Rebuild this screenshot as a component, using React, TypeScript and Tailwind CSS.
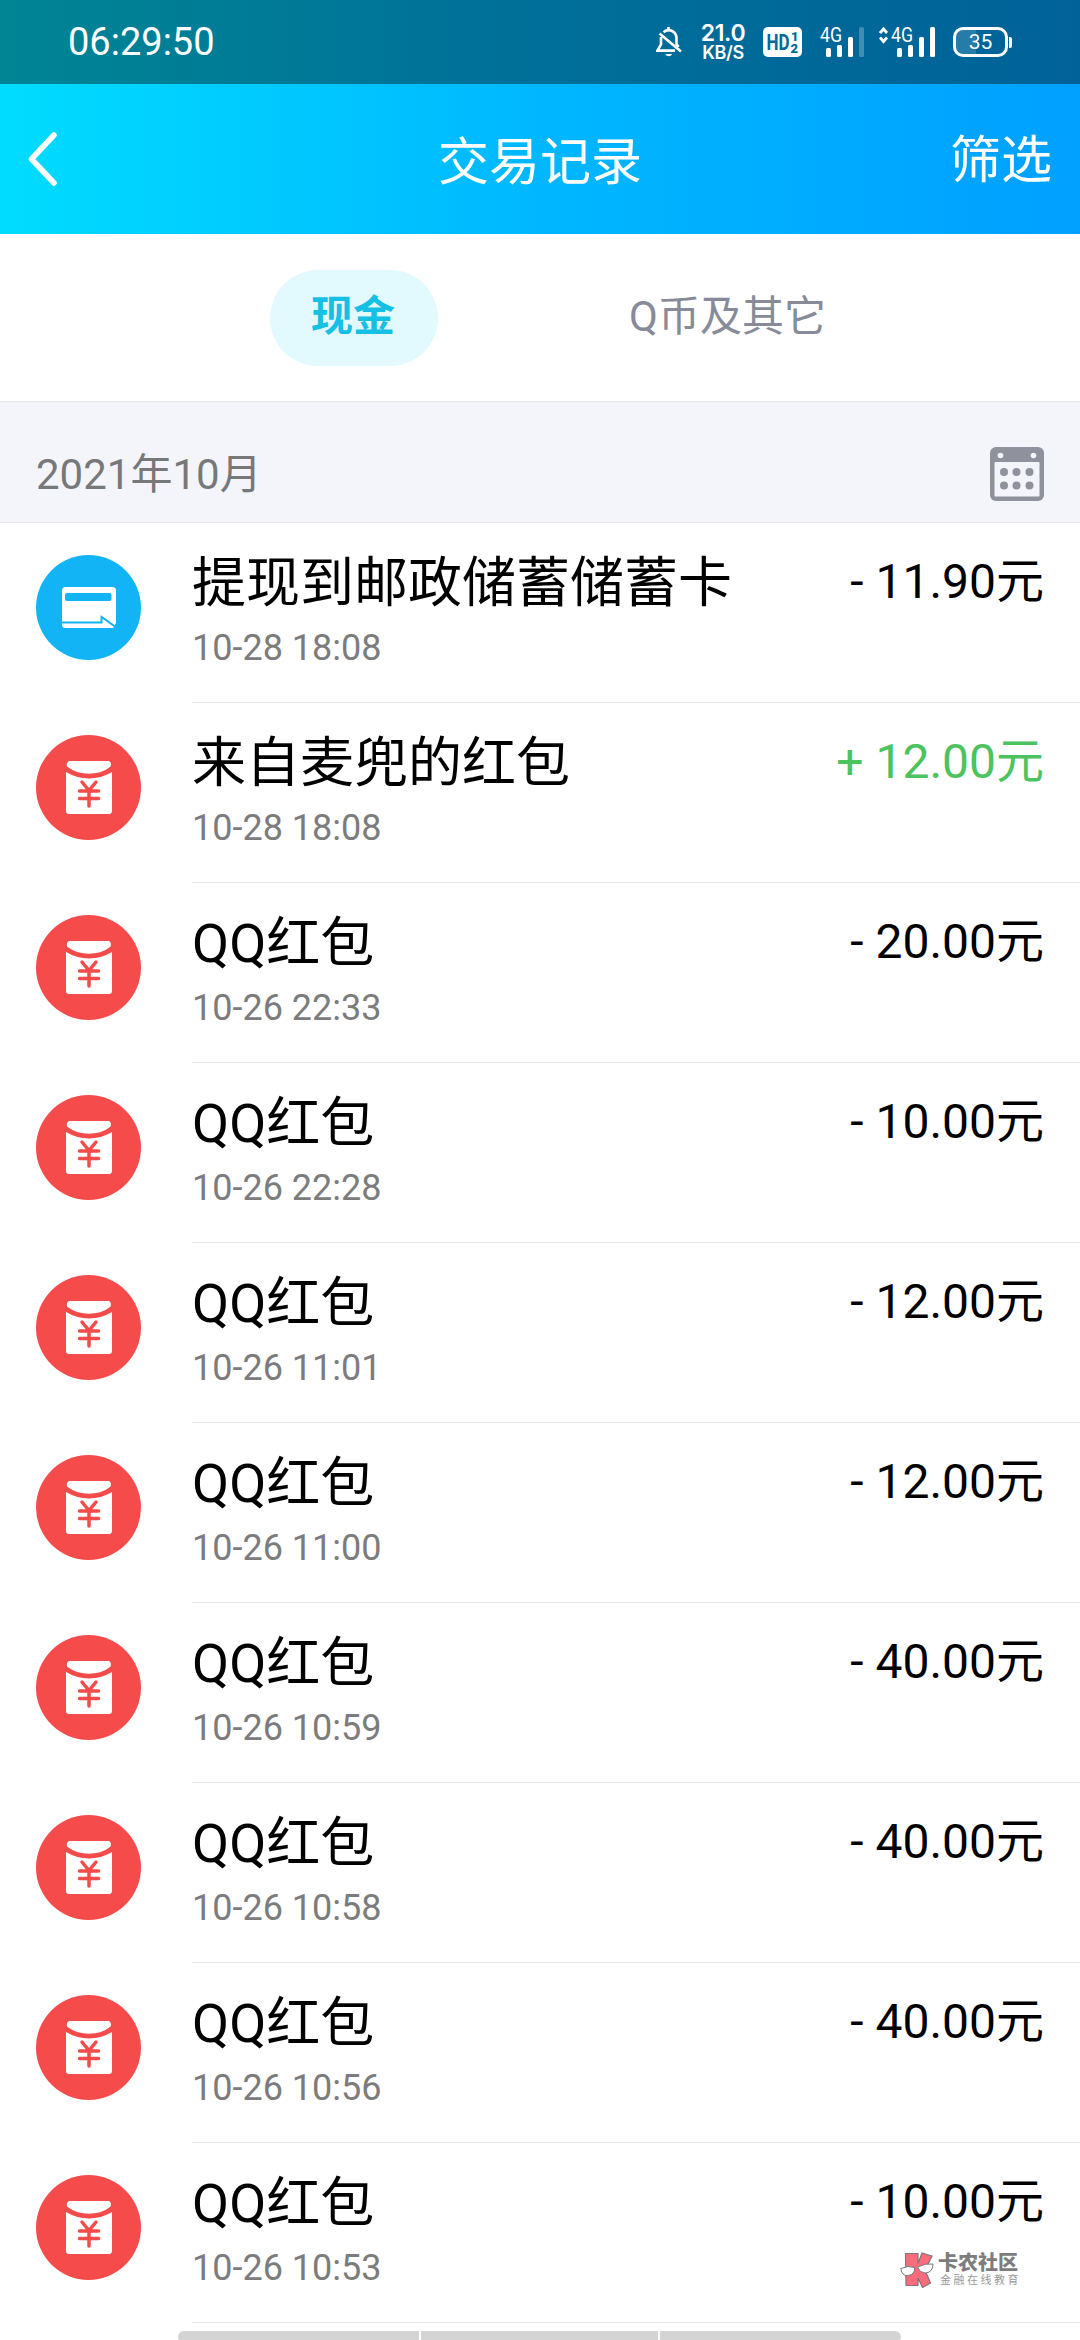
import type { JSX } from "react";

interface Transaction {
  title: string;
  time: string;
  amount: string;
  kind: "card" | "packet";
  income?: boolean;
}

const TRANSACTIONS: Transaction[] = [
  { title: "提现到邮政储蓄储蓄卡", time: "10-28 18:08", amount: "- 11.90元", kind: "card" },
  { title: "来自麦兜的红包", time: "10-28 18:08", amount: "+ 12.00元", kind: "packet", income: true },
  { title: "QQ红包", time: "10-26 22:33", amount: "- 20.00元", kind: "packet" },
  { title: "QQ红包", time: "10-26 22:28", amount: "- 10.00元", kind: "packet" },
  { title: "QQ红包", time: "10-26 11:01", amount: "- 12.00元", kind: "packet" },
  { title: "QQ红包", time: "10-26 11:00", amount: "- 12.00元", kind: "packet" },
  { title: "QQ红包", time: "10-26 10:59", amount: "- 40.00元", kind: "packet" },
  { title: "QQ红包", time: "10-26 10:58", amount: "- 40.00元", kind: "packet" },
  { title: "QQ红包", time: "10-26 10:56", amount: "- 40.00元", kind: "packet" },
  { title: "QQ红包", time: "10-26 10:53", amount: "- 10.00元", kind: "packet" },
];

function StatusBar(): JSX.Element {
  return (
    <div className="flex h-[84px] items-center justify-between bg-linear-to-r from-[#008594] via-[#006f99] via-50% to-[#006299] pr-[68px] pl-[68px] text-white">
      <span className="font-['Roboto',sans-serif] text-[38px] leading-none">06:29:50</span>
      <div className="flex items-center">
        <BellOffIcon />
        <div className="ml-[17px] flex w-[46px] flex-col items-center font-['Inter',sans-serif] font-semibold">
          <span className="text-[23px] leading-[20px] tracking-[-0.3px]">21.0</span>
          <span className="pt-[1px] text-[18px] leading-[17px] tracking-[-0.4px]">KB/S</span>
        </div>
        <HdBadge />
        <Signal className="ml-[18px]" dimLast />
        <Signal className="ml-[15px]" arrows />
        <Battery />
      </div>
    </div>
  );
}

function BellOffIcon(): JSX.Element {
  return (
    <svg className="h-[32px] w-[27px]" viewBox="0 0 27 32" fill="none" stroke="white" strokeWidth="2.600">
      <path d="M12.500 1v3M7.500 6.200C13 1.700 20.500 5.500 20.500 12.500v5.500l2 3" />
      <path d="M5 11v7.500L1.500 24.600H19" />
      <path d="M3.500 7.500L25 25.500" />
      <path d="M9.500 28h6.500c-1 3-5.500 3-6.500 0z" fill="white" stroke="none" />
    </svg>
  );
}

function HdBadge(): JSX.Element {
  return (
    <svg
      className="ml-[17px] h-[30px] w-[39px] rounded-[5px] bg-white font-['Roboto',sans-serif] font-bold text-[#006a99]"
      viewBox="0 0 39 30"
      fill="currentColor"
    >
      <text x="3.500" y="23" fontSize="22" textLength="23" lengthAdjust="spacingAndGlyphs">
        HD
      </text>
      <text x="28" y="14" fontSize="13" fontWeight="900">
        1
      </text>
      <text x="27.500" y="26" fontSize="13" fontWeight="900">
        2
      </text>
    </svg>
  );
}

function Signal({
  className,
  dimLast,
  arrows,
}: {
  className: string;
  dimLast?: boolean;
  arrows?: boolean;
}): JSX.Element {
  return (
    <svg
      className={`${arrows ? "h-[44px] w-[56px]" : "h-[44px] w-[44px]"} ${className}`}
      viewBox={arrows ? "-12 -6 56 44" : "0 -6 44 44"}
      fill="white"
    >
      {arrows ? (
        <path d="M-11 7l3.500-4 3.500 4M-11 11.500l3.500 4 3.500-4" fill="none" stroke="white" strokeWidth="2.800" />
      ) : null}
      <text x="0" y="15.500" fontSize="19.500" textLength="22" lengthAdjust="spacingAndGlyphs" fontFamily="Roboto, sans-serif">
        4G
      </text>
      <rect x="6" y="22" width="5" height="9" rx="1.500" />
      <rect x="17" y="19" width="5" height="12" rx="1.500" />
      <rect x="28" y="11" width="5" height="20" rx="1.500" />
      <rect x="39" y="1" width="5" height="30" rx="1.500" opacity={dimLast ? 0.25 : 1} />
    </svg>
  );
}

function Battery(): JSX.Element {
  return (
    <div className="ml-[18px] flex items-center">
      <div className="flex h-[30px] w-[55px] items-center justify-center rounded-[10px] border-[3px] border-white bg-linear-to-r from-white/15 from-40% to-transparent to-40% font-['Roboto',sans-serif] text-[21px] leading-none">
        35
      </div>
      <div className="ml-[1px] h-[11px] w-[3px] rounded-r-[2px] bg-white" />
    </div>
  );
}

function Header(): JSX.Element {
  return (
    <header className="grid h-[150px] grid-cols-3 items-center bg-linear-to-r from-[#00dcff] via-[#00b7ff] via-50% to-[#00a0ff] px-[28px] text-[51px] leading-none text-white">
      <svg className="h-[54px] w-[29px]" viewBox="0 0 29 54" fill="none" stroke="white" strokeWidth="5.500" strokeLinecap="round" strokeLinejoin="round">
        <path d="M26 3L3.500 27 26 51" />
      </svg>
      <h1 className="pt-[7px] text-center">交易记录</h1>
      <button className="pt-[2px] text-right">筛选</button>
    </header>
  );
}

function Tabs(): JSX.Element {
  return (
    <nav className="flex h-[167px] pt-[36px] pl-[270px] text-[42px] leading-none">
      <button className="h-[96px] w-[168px] rounded-full bg-[#e2f9fe] pr-[2px] pb-[2px] font-bold text-[#16c0e5]">
        现金
      </button>
      <button className="ml-[191px] h-[96px] pb-[2px] text-[#878b99]">Q币及其它</button>
    </nav>
  );
}

function CalendarIcon(): JSX.Element {
  return (
    <svg className="h-[54px] w-[54px]" viewBox="0 0 54 54">
      <rect width="54" height="54" rx="6" fill="#8f919c" />
      <rect x="4.500" y="15" width="45" height="34.500" rx="1" fill="#f4f5fa" />
      <g fill="#f4f5fa">
        <circle cx="10.500" cy="8.500" r="2.800" />
        <circle cx="43.500" cy="8.500" r="2.800" />
      </g>
      <g fill="#8f919c">
        <circle cx="14" cy="25" r="4" />
        <circle cx="26.500" cy="25" r="4" />
        <circle cx="39.500" cy="25" r="4" />
        <circle cx="14" cy="38.500" r="4" />
        <circle cx="26.500" cy="38.500" r="4" />
        <circle cx="39.500" cy="38.500" r="4" />
      </g>
    </svg>
  );
}

function CardIcon(): JSX.Element {
  return (
    <svg className="h-[105px] w-[105px] shrink-0" viewBox="0 0 105 105">
      <circle cx="52.500" cy="52.500" r="52.500" fill="#12b4f5" />
      <rect x="26" y="32" width="54" height="41" rx="3.500" fill="white" />
      <rect x="29" y="38" width="46.500" height="8" rx="2" fill="#12b4f5" />
      <path d="M26 67.500h39.500v-5.500L79 71.500" fill="none" stroke="#12b4f5" strokeWidth="2" />
      <path d="M80 68v5.500h-3z" fill="#12b4f5" />
    </svg>
  );
}

function PacketIcon(): JSX.Element {
  return (
    <svg className="h-[105px] w-[105px] shrink-0" viewBox="0 0 105 105">
      <circle cx="52.500" cy="52.500" r="52.500" fill="#f54b4b" />
      <path d="M33 26h40q3 2 1.500 5.500Q64 41 53 41T31 31.500Q30 27.500 33 26z" fill="white" />
      <path d="M30 37Q41 43.500 53 43.500t23-6.500V76q0 3-3 3H33q-3 0-3-3z" fill="white" />
      <path d="M31 34q10 6.500 22 6.500T75 34" fill="none" stroke="#f54b4b" strokeWidth="3.500" />
      <path d="M46 47l7 8.500 7-8.500M43.500 56h19M43.500 63.500h19M53 55.500V71" fill="none" stroke="#f54b4b" strokeWidth="3.500" strokeLinecap="round" />
    </svg>
  );
}

function TransactionRow({ item }: { item: Transaction }): JSX.Element {
  return (
    <li className="flex h-[180px] pl-[36px]">
      <div className="pt-[32px]">{item.kind === "card" ? <CardIcon /> : <PacketIcon />}</div>
      <div className="ml-[51px] flex flex-1 justify-between border-b border-[#e5e6e8] pr-[36px]">
        <div className="flex flex-col">
          <span className="mt-[33px] text-[54px] leading-[56px] text-black">{item.title}</span>
          <span className="mt-[15px] text-[36px] leading-[42px] text-[#7c7c7c]">{item.time}</span>
        </div>
        <span
          className={`mt-[31px] text-[48px] leading-[56px] ${item.income ? "text-[#4cc35f]" : "text-black"}`}
        >
          {item.amount}
        </span>
      </div>
    </li>
  );
}

function Watermark(): JSX.Element {
  return (
    <div className="absolute top-[2252px] left-[900px] flex items-center gap-[4px]">
      <svg className="h-[36px] w-[34px]" viewBox="0 0 34 36">
        <path
          d="M5.500 1.500h12.500v10L22 1l10 3-7 14 5.500 13-8 4.500L18 26v7.500H6z"
          fill="#fa6c7c"
          stroke="#81747a"
          strokeWidth="1.200"
        />
        <path
          d="M.8 16.500q7-3.500 14-1 0 7-6.500 8T.8 16.500zM17.500 15q8-4 15.500-3 0 8-7 9-6 0-8.500-6z"
          fill="white"
          stroke="#77777a"
          strokeWidth="1"
        />
      </svg>
      <div className="flex flex-col">
        <span className="text-[20px] leading-[20px] font-black text-[#7d7d7d]">卡农社区</span>
        <span className="mt-[1px] pl-[2px] text-[11px] leading-[14px] tracking-[2.500px] text-[#999999]">
          金融在线教育
        </span>
      </div>
    </div>
  );
}

export default function App(): JSX.Element {
  return (
    <div className="relative h-[2340px] w-[1080px] overflow-hidden bg-white font-['Roboto','Noto_Sans_CJK_SC',sans-serif]">
      <StatusBar />
      <Header />
      <Tabs />
      <div className="flex h-[122px] items-center justify-between border-y border-[#e5e7e9] bg-[#f4f5fa] px-[36px] pt-[24px]">
        <span className="pt-[2px] text-[42px] leading-none text-[#77787a]">2021年10月</span>
        <CalendarIcon />
      </div>
      <ul>
        {TRANSACTIONS.map((item) => (
          <TransactionRow key={item.time + item.title} item={item} />
        ))}
      </ul>
      <div className="mt-[8px] ml-[178px] flex h-[12px] w-[723px] gap-[2px] overflow-hidden rounded-[6px]">
        <div className="w-[241px] bg-[#d4d4d4]" />
        <div className="w-[237px] bg-[#d4d4d4]" />
        <div className="flex-1 bg-[#d4d4d4]" />
      </div>
      <Watermark />
    </div>
  );
}
